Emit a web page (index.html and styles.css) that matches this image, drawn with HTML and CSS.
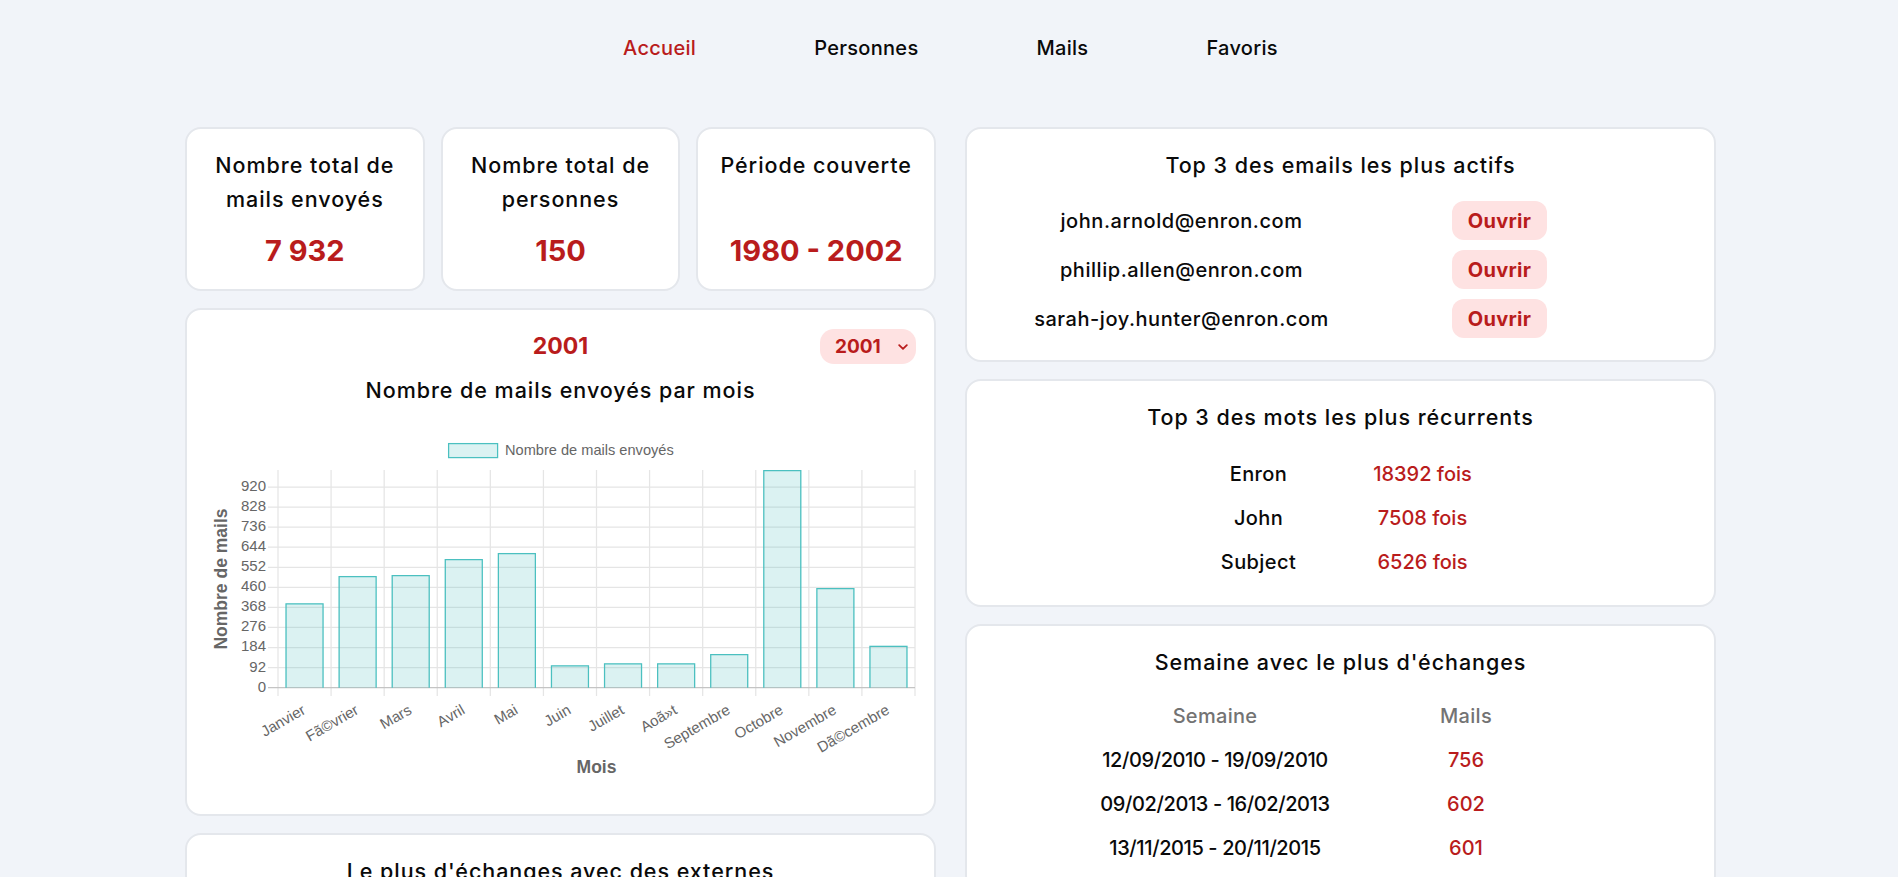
FILE: index.html
```html
<!DOCTYPE html>
<html lang="fr">
<head>
<meta charset="utf-8">
<title>Accueil</title>
<link rel="stylesheet" href="styles.css">
</head>
<body>
<nav class="nav">
  <a class="nav-link active" href="#">Accueil</a>
  <a class="nav-link" href="#">Personnes</a>
  <a class="nav-link" href="#">Mails</a>
  <a class="nav-link" href="#">Favoris</a>
</nav>
<main class="main">
  <section class="col">
    <div class="stats">
      <div class="card stat">
        <h3 class="stat-title">Nombre total de mails envoyés</h3>
        <p class="stat-value">7 932</p>
      </div>
      <div class="card stat">
        <h3 class="stat-title">Nombre total de personnes</h3>
        <p class="stat-value">150</p>
      </div>
      <div class="card stat">
        <h3 class="stat-title">Période couverte</h3>
        <p class="stat-value">1980 - 2002</p>
      </div>
    </div>

    <div class="card chart-card">
      <div class="chart-head">
        <span></span>
        <h2 class="year">2001</h2>
        <div class="select">
          <span>2001</span>
          <svg class="chevron" width="10" height="6" viewBox="0 0 10 6"><path d="M1.2 1.2 5 4.8 8.8 1.2" fill="none" stroke="#b91c1c" stroke-width="1.8" stroke-linecap="round" stroke-linejoin="round"/></svg>
        </div>
      </div>
      <h3 class="chart-title">Nombre de mails envoyés par mois</h3>
      <svg class="chart" width="711" height="392" viewBox="0 0 711 392">
        <g class="legend">
          <rect x="243.6" y="39.6" width="49" height="14" fill="rgba(75,192,192,0.2)" stroke="rgb(75,192,192)" stroke-width="1.25"/>
          <text x="300" y="47">Nombre de mails envoyés</text>
        </g>
        <g class="grid" stroke="#e5e5e5" stroke-width="1.25">
          <line x1="73" y1="66" x2="73" y2="292"/>
          <line x1="126.08" y1="66" x2="126.08" y2="292"/>
          <line x1="179.17" y1="66" x2="179.17" y2="292"/>
          <line x1="232.25" y1="66" x2="232.25" y2="292"/>
          <line x1="285.33" y1="66" x2="285.33" y2="292"/>
          <line x1="338.42" y1="66" x2="338.42" y2="292"/>
          <line x1="391.5" y1="66" x2="391.5" y2="292"/>
          <line x1="444.58" y1="66" x2="444.58" y2="292"/>
          <line x1="497.67" y1="66" x2="497.67" y2="292"/>
          <line x1="550.75" y1="66" x2="550.75" y2="292"/>
          <line x1="603.83" y1="66" x2="603.83" y2="292"/>
          <line x1="656.92" y1="66" x2="656.92" y2="292"/>
          <line x1="710" y1="66" x2="710" y2="292"/>
          <line x1="63" y1="263.6" x2="710" y2="263.6"/>
          <line x1="63" y1="243.5" x2="710" y2="243.5"/>
          <line x1="63" y1="223.4" x2="710" y2="223.4"/>
          <line x1="63" y1="203.4" x2="710" y2="203.4"/>
          <line x1="63" y1="183.3" x2="710" y2="183.3"/>
          <line x1="63" y1="163.3" x2="710" y2="163.3"/>
          <line x1="63" y1="143.2" x2="710" y2="143.2"/>
          <line x1="63" y1="123.1" x2="710" y2="123.1"/>
          <line x1="63" y1="103.1" x2="710" y2="103.1"/>
          <line x1="63" y1="83" x2="710" y2="83"/>
        </g>
        <line x1="63" y1="283.7" x2="710" y2="283.7" stroke="#c4c4c4" stroke-width="1.25"/>
        <g class="ticks-y" text-anchor="end">
          <text x="61" y="283.7">0</text>
          <text x="61" y="263.6">92</text>
          <text x="61" y="243.5">184</text>
          <text x="61" y="223.4">276</text>
          <text x="61" y="203.4">368</text>
          <text x="61" y="183.3">460</text>
          <text x="61" y="163.3">552</text>
          <text x="61" y="143.2">644</text>
          <text x="61" y="123.1">736</text>
          <text x="61" y="103.1">828</text>
          <text x="61" y="83">920</text>
        </g>
        <g class="bars" fill="rgba(75,192,192,0.2)">
          <rect x="80.43" y="199.35" width="38.22" height="84.35"/>
          <rect x="133.52" y="171.96" width="38.22" height="111.74"/>
          <rect x="186.6" y="171.09" width="38.22" height="112.61"/>
          <rect x="239.68" y="155" width="38.22" height="128.7"/>
          <rect x="292.77" y="148.92" width="38.22" height="134.78"/>
          <rect x="345.85" y="261.31" width="38.22" height="22.39"/>
          <rect x="398.93" y="259.35" width="38.22" height="24.35"/>
          <rect x="452.02" y="259.35" width="38.22" height="24.35"/>
          <rect x="505.1" y="250" width="38.22" height="33.7"/>
          <rect x="558.18" y="66.09" width="38.22" height="217.61"/>
          <rect x="611.27" y="183.92" width="38.22" height="99.78"/>
          <rect x="664.35" y="241.74" width="38.22" height="41.96"/>
        </g>
        <g class="bar-borders" fill="none" stroke="rgb(75,192,192)" stroke-width="1.25">
          <path d="M81.05 283.7V199.97H118.03V283.7"/>
          <path d="M134.14 283.7V172.58H171.12V283.7"/>
          <path d="M187.22 283.7V171.71H224.2V283.7"/>
          <path d="M240.3 283.7V155.62H277.28V283.7"/>
          <path d="M293.39 283.7V149.54H330.37V283.7"/>
          <path d="M346.47 283.7V261.93H383.45V283.7"/>
          <path d="M399.55 283.7V259.97H436.53V283.7"/>
          <path d="M452.64 283.7V259.97H489.62V283.7"/>
          <path d="M505.72 283.7V250.62H542.7V283.7"/>
          <path d="M558.8 283.7V66.71H595.78V283.7"/>
          <path d="M611.89 283.7V184.54H648.87V283.7"/>
          <path d="M664.97 283.7V242.36H701.95V283.7"/>
        </g>
        <g class="ticks-x" text-anchor="end">
          <text transform="translate(99.54 305.5) rotate(-30)">Janvier</text>
          <text transform="translate(152.63 305.5) rotate(-30)">Fã©vrier</text>
          <text transform="translate(205.71 305.5) rotate(-30)">Mars</text>
          <text transform="translate(258.79 305.5) rotate(-30)">Avril</text>
          <text transform="translate(311.88 305.5) rotate(-30)">Mai</text>
          <text transform="translate(364.96 305.5) rotate(-30)">Juin</text>
          <text transform="translate(418.04 305.5) rotate(-30)">Juillet</text>
          <text transform="translate(471.13 305.5) rotate(-30)">Aoã»t</text>
          <text transform="translate(524.21 305.5) rotate(-30)">Septembre</text>
          <text transform="translate(577.29 305.5) rotate(-30)">Octobre</text>
          <text transform="translate(630.38 305.5) rotate(-30)">Novembre</text>
          <text transform="translate(683.46 305.5) rotate(-30)">Dã©cembre</text>
        </g>
        <text class="axis-title" transform="translate(17 175) rotate(-90)" text-anchor="middle">Nombre de mails</text>
        <text class="axis-title" x="391.5" y="364" text-anchor="middle">Mois</text>
      </svg>
    </div>

    <div class="card externes">
      <h3 class="card-title">Le plus d'échanges avec des externes</h3>
    </div>
  </section>

  <section class="col">
    <div class="card actifs">
      <h3 class="card-title">Top 3 des emails les plus actifs</h3>
      <div class="email-list">
        <span class="email">john.arnold@enron.com</span>
        <button class="btn" type="button">Ouvrir</button>
        <span class="email">phillip.allen@enron.com</span>
        <button class="btn" type="button">Ouvrir</button>
        <span class="email">sarah-joy.hunter@enron.com</span>
        <button class="btn" type="button">Ouvrir</button>
      </div>
    </div>

    <div class="card mots">
      <h3 class="card-title">Top 3 des mots les plus récurrents</h3>
      <div class="word-list">
        <span class="word">Enron</span><span class="count">18392 fois</span>
        <span class="word">John</span><span class="count">7508 fois</span>
        <span class="word">Subject</span><span class="count">6526 fois</span>
      </div>
    </div>

    <div class="card semaine">
      <h3 class="card-title">Semaine avec le plus d'échanges</h3>
      <div class="week-table">
        <span class="th">Semaine</span><span class="th">Mails</span>
        <span class="week">12/09/2010 - 19/09/2010</span><span class="count">756</span>
        <span class="week">09/02/2013 - 16/02/2013</span><span class="count">602</span>
        <span class="week">13/11/2015 - 20/11/2015</span><span class="count">601</span>
      </div>
    </div>
  </section>
</main>
</body>
</html>
```

FILE: styles.css
```css
* {
  box-sizing: border-box;
}

html,
body {
  margin: 0;
}

body {
  background: #f1f4f9;
  font-family: Inter, "Noto Sans", sans-serif;
  color: #0a0a0a;
}

.nav {
  display: flex;
  justify-content: center;
  align-items: center;
  gap: 118px;
  height: 96px;
  padding-left: 3px;
}

.nav-link {
  font-size: 20px;
  font-weight: 500;
  letter-spacing: 0.3px;
  color: #0a0a0a;
  text-decoration: none;
}

.nav-link.active {
  color: #b91c1c;
}

.main {
  display: grid;
  grid-template-columns: 751px 751px;
  column-gap: 29px;
  justify-content: center;
  align-items: start;
  padding: 31px 0 40px 3px;
}

.col {
  display: flex;
  flex-direction: column;
  gap: 17px;
}

.stats {
  display: grid;
  grid-template-columns: repeat(3, 1fr);
  gap: 16px;
}

.card {
  background: #fff;
  border: 2px solid #e4e7ec;
  border-radius: 16px;
  padding: 20px;
}

.stat {
  display: flex;
  flex-direction: column;
  justify-content: space-between;
  align-items: center;
  gap: 17px;
  text-align: center;
  padding: 19px 12px 20px;
}

.stat-title {
  margin: 0;
  font-size: 21.5px;
  font-weight: 500;
  letter-spacing: 0.95px;
  line-height: 34px;
}

.stat-value {
  margin: 0;
  font-size: 29px;
  font-weight: 700;
  line-height: 36px;
  color: #b91c1c;
}

.chart-card {
  padding: 19px 18px 18px;
}

.chart-head {
  display: grid;
  grid-template-columns: 1fr auto 1fr;
  align-items: center;
  height: 35px;
}

.year {
  margin: 0;
  font-size: 23px;
  font-weight: 700;
  color: #b91c1c;
  line-height: 35px;
}

.select {
  justify-self: end;
  display: flex;
  align-items: center;
  justify-content: space-between;
  width: 96px;
  height: 35px;
  padding: 0 8px 0 15px;
  border-radius: 14px;
  background: #fee2e2;
  color: #b91c1c;
  font-size: 19px;
  font-weight: 700;
}

.chevron {
  display: block;
}

.chart-title {
  margin: 12px 0 0;
  font-size: 21.5px;
  font-weight: 500;
  letter-spacing: 0.95px;
  line-height: 28px;
  text-align: center;
}

.chart {
  display: block;
  font-family: "Liberation Sans", Arial, sans-serif;
  font-size: 15px;
  fill: #666;
}

.chart text {
  dominant-baseline: middle;
}

.legend text {
  font-size: 14.6px;
}

.axis-title {
  font-size: 17.5px;
  font-weight: 700;
}

.card-title {
  margin: 0;
  font-size: 21.5px;
  font-weight: 500;
  letter-spacing: 0.95px;
  line-height: 32px;
  text-align: center;
}

.externes {
  min-height: 200px;
}

.actifs {
  padding-bottom: 22px;
}

.email-list {
  display: grid;
  grid-template-columns: 318px 318px;
  justify-content: center;
  justify-items: center;
  align-items: center;
  row-gap: 10px;
  margin-top: 20px;
}

.email {
  font-size: 20px;
  font-weight: 500;
  letter-spacing: 0.55px;
}

.btn {
  height: 39px;
  padding: 0 16px;
  border: none;
  border-radius: 12px;
  background: #fee2e2;
  color: #b91c1c;
  font-family: inherit;
  font-size: 20px;
  font-weight: 700;
  letter-spacing: 0.3px;
}

.mots {
  padding-bottom: 21px;
}

.word-list {
  display: grid;
  grid-template-columns: 164px 164px;
  grid-auto-rows: 44px;
  justify-content: center;
  justify-items: center;
  align-items: center;
  margin-top: 19px;
  font-size: 20px;
  font-weight: 500;
}

.word {
  letter-spacing: 0.4px;
}

.count {
  color: #b91c1c;
  font-weight: 500;
}

.week-table {
  display: grid;
  grid-template-columns: 251px 251px;
  grid-auto-rows: 44px;
  justify-content: center;
  justify-items: center;
  align-items: center;
  margin-top: 16px;
  font-size: 20px;
  font-weight: 500;
}

.week {
  letter-spacing: -0.4px;
}

.th {
  color: #737373;
  letter-spacing: 0.3px;
}
```
